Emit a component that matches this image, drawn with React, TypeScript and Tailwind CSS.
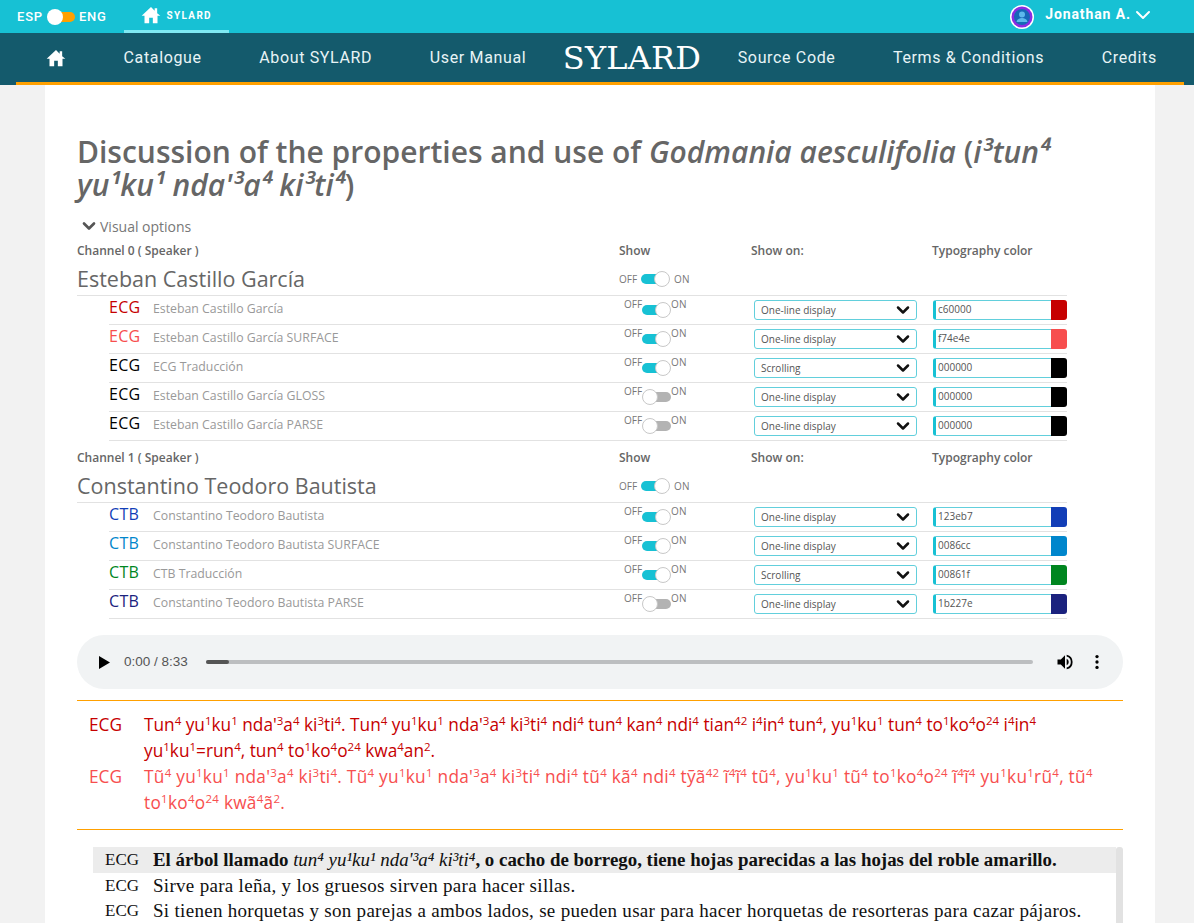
import React from 'react'
import { ChevronDown } from 'lucide-react'

const HomeIcon = ({ className }: { className: string }) => (
  <svg viewBox="0 0 24 24" className={className} fill="currentColor">
    <path d="M12 2.5 0.8 12.8h3.4V22h5.6v-6.6h4.4V22h5.6v-9.2h3.4L19.4 9.8V4h-3v3L12 2.5z" />
  </svg>
)

const Toggle = ({ on }: { on: boolean }) => (
  <span className="flex items-center">
    {on ? (
      <>
        <span className="h-[10px] w-[16px] rounded-l-full bg-[#17c1d4]" />
        <span className="-ml-[3px] h-[16px] w-[16px] rounded-full border border-[#c8c8c8] bg-white" />
      </>
    ) : (
      <>
        <span className="h-[16px] w-[16px] rounded-full border border-[#c8c8c8] bg-white z-10" />
        <span className="-ml-[3px] h-[10px] w-[16px] rounded-r-full bg-[#b3b3b3]" />
      </>
    )}
  </span>
)

type Row = { code: string; name: string; on: boolean; mode: string; hex: string; color: string }

const channel0: Row[] = [
  { code: 'ECG', name: 'Esteban Castillo García', on: true, mode: 'One-line display', hex: 'c60000', color: '#c60000' },
  { code: 'ECG', name: 'Esteban Castillo García SURFACE', on: true, mode: 'One-line display', hex: 'f74e4e', color: '#f74e4e' },
  { code: 'ECG', name: 'ECG Traducción', on: true, mode: 'Scrolling', hex: '000000', color: '#000000' },
  { code: 'ECG', name: 'Esteban Castillo García GLOSS', on: false, mode: 'One-line display', hex: '000000', color: '#000000' },
  { code: 'ECG', name: 'Esteban Castillo García PARSE', on: false, mode: 'One-line display', hex: '000000', color: '#000000' },
]

const channel1: Row[] = [
  { code: 'CTB', name: 'Constantino Teodoro Bautista', on: true, mode: 'One-line display', hex: '123eb7', color: '#123eb7' },
  { code: 'CTB', name: 'Constantino Teodoro Bautista SURFACE', on: true, mode: 'One-line display', hex: '0086cc', color: '#0086cc' },
  { code: 'CTB', name: 'CTB Traducción', on: true, mode: 'Scrolling', hex: '00861f', color: '#00861f' },
  { code: 'CTB', name: 'Constantino Teodoro Bautista PARSE', on: false, mode: 'One-line display', hex: '1b227e', color: '#1b227e' },
]

const Channel = ({ title, speaker, rows }: { title: string; speaker: string; rows: Row[] }) => (
  <div className="w-[990px]">
    <div className="flex h-[22px] items-center pt-[2px] text-[12px] font-semibold text-[#666]">
      <span className="w-[542px]">{title}</span>
      <span className="w-[132px]">Show</span>
      <span className="w-[181px]">Show on:</span>
      <span>Typography color</span>
    </div>
    <div className="flex h-[35px] items-center border-b border-[#e2e2e2] pt-[2px]">
      <span className="w-[542px] text-[21.5px] font-medium text-[#666]">{speaker}</span>
      <span className="flex items-center gap-[4px] text-[10px] text-[#777]">
        OFF <Toggle on={true} /> ON
      </span>
    </div>
    {rows.map((r) => (
      <div key={r.name} className="ml-[32px] flex h-[29px] items-center border-b border-[#e2e2e2]">
        <span className="-mt-[7px] w-[44px] text-[16px] tracking-[0.3px]" style={{ color: r.color }}>{r.code}</span>
        <span className="-mt-[1px] w-[471px] text-[12.3px] text-[#999]">{r.name}</span>
        <span className="flex w-[130px] items-start text-[10px] leading-[12px] text-[#777]">
          <span className="-mt-[4px]">OFF</span>
          <Toggle on={r.on} />
          <span className="-mt-[4px]">ON</span>
        </span>
        <span className="flex h-[20px] w-[163px] items-center justify-between rounded-[3px] border border-[#62cfdc] pl-[6px] pr-[3px] text-[10px] text-[#555]">
          {r.mode}
          <ChevronDown size={20} strokeWidth={3} className="text-[#111]" />
        </span>
        <span className="ml-[16px] flex h-[20px] w-[134px] items-stretch">
          <span className="flex flex-1 items-center rounded-l-[3px] border border-r-0 border-l-[3px] border-[#62cfdc] border-l-[#17c1d4] pl-[2px] text-[10px] text-[#555]">
            <span className="-mt-[2px]">{r.hex}</span>
          </span>
          <span className="w-[16px] rounded-r-[3px]" style={{ backgroundColor: r.color }} />
        </span>
      </div>
    ))}
  </div>
)

const Tone = ({ children }: { children: React.ReactNode }) => (
  <sup className="text-[11.5px] leading-none">{children}</sup>
)

const App = () => {
  return (
    <div className="h-[923px] overflow-hidden bg-[#f2f2f2] font-['Open_Sans',sans-serif]">
      <div className="flex h-[33px] items-center bg-[#17c1d4] pl-[17px] pr-[39px] font-['Roboto',sans-serif] text-white">
        <span className="flex items-center gap-[4px] text-[13px] font-medium tracking-[0.8px]">
          ESP
          <span className="flex items-center">
            <span className="z-10 h-[16px] w-[16px] rounded-full bg-white" />
            <span className="-ml-[3px] h-[10px] w-[15px] rounded-r-full bg-[#ffa000]" />
          </span>
          ENG
        </span>
        <span className="ml-[17px] flex h-[33px] w-[105px] items-center justify-center gap-[6px] border-b-[3px] border-[#7fe9f3] text-[10px] font-bold tracking-[1.3px]">
          <HomeIcon className="h-[20px] w-[20px]" />
          SYLARD
        </span>
        <span className="ml-auto flex items-center gap-[11px] text-[14px] font-bold tracking-[0.9px]">
          <svg viewBox="0 0 24 24" className="h-[24px] w-[24px]">
            <circle cx="12" cy="12" r="12" fill="#fff" />
            <circle cx="12" cy="12" r="10.5" fill="#8a2be2" />
            <circle cx="12" cy="12" r="8" fill="#1668b8" />
            <circle cx="12" cy="9.5" r="3" fill="#5cb8ec" />
            <path d="M6.5 17c.6-3 3-4 5.5-4s4.9 1 5.5 4z" fill="#5cb8ec" />
          </svg>
          <span className="-mt-[4px] flex items-center">
            Jonathan A.
            <ChevronDown size={24} strokeWidth={2} />
          </span>
        </span>
      </div>
      <nav className="h-[52px] bg-[#145a6c]">
        <div className="flex h-[49px] items-center gap-[57.5px] pl-[46px] font-['Roboto',sans-serif] text-[16px] tracking-[0.65px] text-[#e8f4f6]">
          <HomeIcon className="h-[20px] w-[20px] text-white" />
          <span>Catalogue</span>
          <span>About SYLARD</span>
          <span>User Manual</span>
          <span className="-mx-[21px] font-['DejaVu_Serif',serif] text-[32px] tracking-[0.2px] text-white">SYLARD</span>
          <span>Source Code</span>
          <span>Terms &amp; Conditions</span>
          <span>Credits</span>
        </div>
        <div className="ml-[16px] mr-[10px] h-[3px] bg-[#ffa000]" />
      </nav>
      <main className="ml-[45px] h-[838px] w-[1110px] bg-white px-[32px] pt-[50px]">
        <h1 className="text-[30px] leading-[33px] font-semibold text-[#666]">
          Discussion of the properties and use of <i>Godmania aesculifolia</i> (<i>i³tun⁴</i>
          <br />
          <i>yu¹ku¹ nda'³a⁴ ki³ti⁴</i>)
        </h1>
        <div className="mb-[1px] mt-[13px] flex h-[24px] items-center gap-[1px] pl-[2px] text-[14px] text-[#777]">
          <ChevronDown size={20} strokeWidth={3.2} className="text-[#555]" />
          Visual options
        </div>
        <Channel title="Channel 0 ( Speaker )" speaker="Esteban Castillo García" rows={channel0} />
        <div className="h-[5px]" />
        <Channel title="Channel 1 ( Speaker )" speaker="Constantino Teodoro Bautista" rows={channel1} />
        <div className="mt-[16px] flex h-[54px] w-[1046px] items-center rounded-full bg-[#f1f3f4] pl-[22px]">
          <svg viewBox="0 0 12 14" className="h-[13px] w-[11px] shrink-0">
            <path d="M0 0 12 7 0 14z" fill="#000" />
          </svg>
          <span className="ml-[14px] w-[82px] shrink-0 whitespace-nowrap font-['Liberation_Sans',sans-serif] text-[13.5px] text-[#555]">0:00 / 8:33</span>
          <span className="flex h-[4px] w-[827px] shrink-0 rounded-full bg-[#bcbec0]">
            <span className="h-[4px] w-[23px] rounded-full bg-[#555]" />
          </span>
          <svg viewBox="0 0 24 24" className="ml-[22px] h-[20px] w-[20px] shrink-0" fill="#000">
            <path d="M3 9v6h4l5 5V4L7 9H3zm13.5 3A4.5 4.5 0 0 0 14 8v8a4.5 4.5 0 0 0 2.5-4zM14 3.2v2.1a7 7 0 0 1 0 13.4v2.1a9 9 0 0 0 0-17.6z" />
          </svg>
          <svg viewBox="0 0 24 24" className="ml-[12px] h-[20px] w-[20px] shrink-0" fill="#000">
            <circle cx="12" cy="5.5" r="2" />
            <circle cx="12" cy="12" r="2" />
            <circle cx="12" cy="18.5" r="2" />
          </svg>
        </div>
        <div className="mt-[11px] w-[1046px] border-t border-[#ffa000] pb-[13px] pt-[11px] text-[17.25px] leading-[26px]">
          <div className="flex text-[#c60000]">
            <span className="w-[67px] shrink-0 pl-[12px]">ECG</span>
            <p>
              Tun<Tone>4</Tone> yu<Tone>1</Tone>ku<Tone>1</Tone> nda'<Tone>3</Tone>a<Tone>4</Tone> ki<Tone>3</Tone>ti<Tone>4</Tone>. Tun<Tone>4</Tone> yu<Tone>1</Tone>ku<Tone>1</Tone> nda'<Tone>3</Tone>a<Tone>4</Tone> ki<Tone>3</Tone>ti<Tone>4</Tone> ndi<Tone>4</Tone> tun<Tone>4</Tone> kan<Tone>4</Tone> ndi<Tone>4</Tone> tian<Tone>42</Tone> i<Tone>4</Tone>in<Tone>4</Tone> tun<Tone>4</Tone>, yu<Tone>1</Tone>ku<Tone>1</Tone> tun<Tone>4</Tone> to<Tone>1</Tone>ko<Tone>4</Tone>o<Tone>24</Tone> i<Tone>4</Tone>in<Tone>4</Tone> yu<Tone>1</Tone>ku<Tone>1</Tone>=run<Tone>4</Tone>, tun<Tone>4</Tone> to<Tone>1</Tone>ko<Tone>4</Tone>o<Tone>24</Tone> kwa<Tone>4</Tone>an<Tone>2</Tone>.
            </p>
          </div>
          <div className="flex text-[#f74e4e]">
            <span className="w-[67px] shrink-0 pl-[12px]">ECG</span>
            <p className="tracking-[0.27px]">
              Tũ<Tone>4</Tone> yu<Tone>1</Tone>ku<Tone>1</Tone> nda'<Tone>3</Tone>a<Tone>4</Tone> ki<Tone>3</Tone>ti<Tone>4</Tone>. Tũ<Tone>4</Tone> yu<Tone>1</Tone>ku<Tone>1</Tone> nda'<Tone>3</Tone>a<Tone>4</Tone> ki<Tone>3</Tone>ti<Tone>4</Tone> ndi<Tone>4</Tone> tũ<Tone>4</Tone> kã<Tone>4</Tone> ndi<Tone>4</Tone> tỹã<Tone>42</Tone> ĩ<Tone>4</Tone>ĩ<Tone>4</Tone> tũ<Tone>4</Tone>, yu<Tone>1</Tone>ku<Tone>1</Tone> tũ<Tone>4</Tone> to<Tone>1</Tone>ko<Tone>4</Tone>o<Tone>24</Tone> ĩ<Tone>4</Tone>ĩ<Tone>4</Tone> yu<Tone>1</Tone>ku<Tone>1</Tone>rũ<Tone>4</Tone>, tũ<Tone>4</Tone> to<Tone>1</Tone>ko<Tone>4</Tone>o<Tone>24</Tone> kwã<Tone>4</Tone>ã<Tone>2</Tone>.
            </p>
          </div>
        </div>
        <div className="w-[1046px] border-t border-[#ffa000] pl-[16px] pt-[17px] font-['Liberation_Serif',serif] text-[19px] leading-[25.5px] text-[#111]">
          <div className="flex justify-between">
            <div className="flex-1">
              <div className="flex bg-[#ececec] pl-[12px] text-[18.9px] font-bold">
                <span className="w-[48px] text-[17px] font-normal">ECG</span>
                <span>El árbol llamado <i className="font-normal">tun⁴ yu¹ku¹ nda'³a⁴ ki³ti⁴</i>, o cacho de borrego, tiene hojas parecidas a las hojas del roble amarillo.</span>
              </div>
              <div className="flex pl-[12px]">
                <span className="w-[48px] text-[17px]">ECG</span>
                <span className="tracking-[0.3px]">Sirve para leña, y los gruesos sirven para hacer sillas.</span>
              </div>
              <div className="flex pl-[12px]">
                <span className="w-[48px] text-[17px]">ECG</span>
                <span className="tracking-[0.3px]">Si tienen horquetas y son parejas a ambos lados, se pueden usar para hacer horquetas de resorteras para cazar pájaros.</span>
              </div>
            </div>
            <div className="w-[7px] rounded-t-[3px] bg-[#e2e2e2]" />
          </div>
        </div>
      </main>
    </div>
  )
}

export default App
